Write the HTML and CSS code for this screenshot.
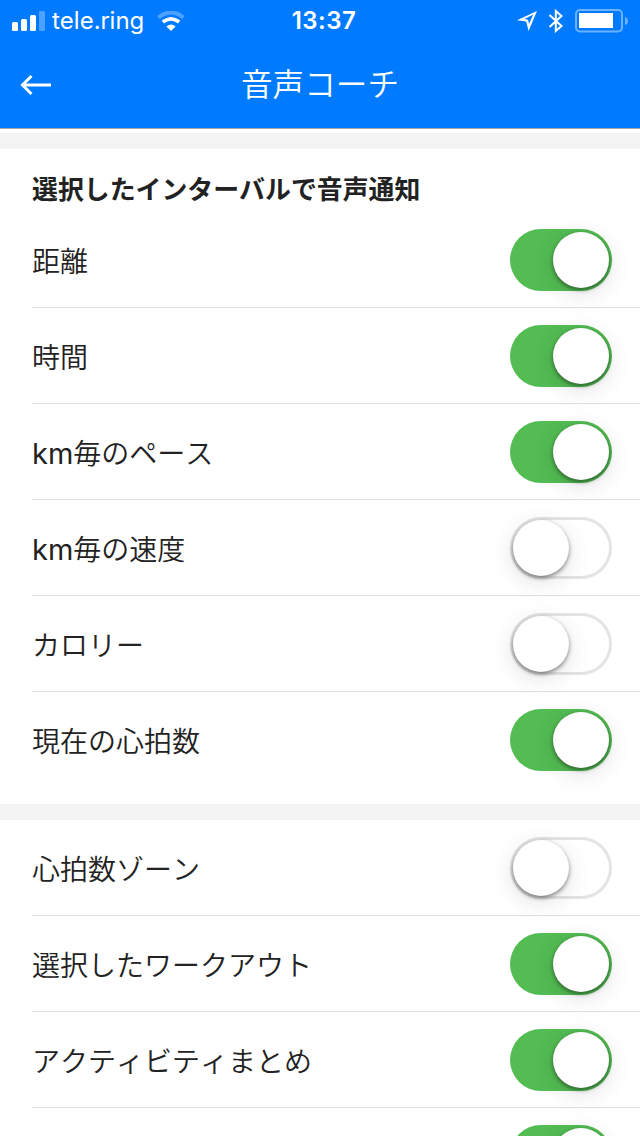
FILE: index.html
```html
<!DOCTYPE html>
<html lang="ja">
<head>
<meta charset="utf-8">
<title>音声コーチ</title>
<link rel="stylesheet" href="styles.css">
</head>
<body>
<header class="header">
  <div class="status">
    <div class="status-left">
      <svg class="signal" width="34" height="20" viewBox="0 0 34 20" fill="#fff"><rect x="0" y="11" width="6" height="9" rx="1.5"/><rect x="9" y="8" width="6" height="12" rx="1.5"/><rect x="18" y="4" width="6" height="16" rx="1.5"/><rect x="27" y="0" width="6" height="20" rx="1.5" opacity=".3"/></svg>
      <span class="carrier">tele.ring</span>
      <svg class="wifi" width="28" height="20" viewBox="0 0 28 20" fill="none" stroke="#fff"><path d="M1.5 6.6Q14-3.6 26.5 6.6" stroke-width="4" opacity=".3"/><path d="M5.8 11Q14 4.8 22.2 11" stroke-width="3.8"/><path d="M9.4 15.4Q14 11.6 18.6 15.4L14 20Z" fill="#fff" stroke="none"/></svg>
    </div>
    <span class="clock">13:37</span>
    <div class="status-right">
      <svg width="20" height="20" viewBox="0 0 20 20" fill="#fff" fill-rule="evenodd"><path d="M20 0L11.6 20L9.2 10.6L0 9.2ZM16.2 3.5L7.5 8L11 8.8L12 13Z"/></svg>
      <svg class="bluetooth" width="16" height="24" viewBox="0 0 16 24" fill="none" stroke="#fff" stroke-width="2"><path d="M1.5 6L13.5 17L7.8 22V2L13.5 7L1.5 18"/></svg>
      <svg class="battery" width="54" height="24" viewBox="0 0 54 24"><rect x="1" y="1" width="46" height="21.5" rx="4" fill="none" stroke="#fff" stroke-width="2" opacity=".42"/><rect x="4" y="4" width="34" height="15" fill="#fff"/><path d="M50 8Q53 9 53 12T50 16Z" fill="#fff" opacity=".42"/></svg>
    </div>
  </div>
  <div class="navbar">
    <svg class="back" width="32" height="22" viewBox="0 0 32 22" fill="none" stroke="#fff" stroke-width="3"><path d="M2 11H31M11.5 2L2.5 11L11.5 20"/></svg>
    <h1 class="title">音声コーチ</h1>
  </div>
</header>
<main>
  <section class="group group-first">
    <h2 class="heading">選択したインターバルで音声通知</h2>
    <div class="row"><span>距離</span><i class="toggle on"></i></div>
    <div class="row"><span>時間</span><i class="toggle on"></i></div>
    <div class="row"><span><b class="unit">km</b>毎のペース</span><i class="toggle on"></i></div>
    <div class="row"><span><b class="unit">km</b>毎の速度</span><i class="toggle"></i></div>
    <div class="row"><span>カロリー</span><i class="toggle"></i></div>
    <div class="row last"><span>現在の心拍数</span><i class="toggle on"></i></div>
  </section>
  <section class="group group-second">
    <div class="row"><span>心拍数ゾーン</span><i class="toggle"></i></div>
    <div class="row"><span>選択したワークアウト</span><i class="toggle on"></i></div>
    <div class="row"><span>アクティビティまとめ</span><i class="toggle on"></i></div>
    <div class="row"><span></span><i class="toggle on"></i></div>
  </section>
</main>
</body>
</html>
```
FILE: styles.css
```css
* { box-sizing: border-box; }
body {
  margin: 0;
  background: #fff;
  color: #222;
  font-family: "Noto Sans CJK JP", sans-serif;
  font-kerning: none;
}
svg { display: block; flex: none; }
.header {
  height: 129px;
  background: #007aff;
  border-bottom: 1px solid #a7a7aa;
  color: #fff;
}
.status {
  height: 40px;
  display: grid;
  grid-template-columns: 1fr auto 1fr;
  padding: 0 11px 0 12px;
  align-items: center;
  font-family: Inter, sans-serif;
}
.status-left, .status-right { display: flex; align-items: center; }
.status-right { justify-content: flex-end; }
.carrier { margin-left: 6px; font-size: 24px; line-height: 40px; padding-top: 1px; }
.wifi { margin-left: 13px; }
.clock { font-size: 24px; font-weight: 600; line-height: 40px; padding: 1px 0 0 7px; letter-spacing: 0.5px; }
.bluetooth { margin-left: 11px; }
.battery { margin-left: 11px; }
.navbar {
  height: 84px;
  display: grid;
  grid-template-columns: 32px 1fr 32px;
  align-items: center;
  padding: 0 20px;
}
.back { margin-top: 5px; }
.title {
  margin: 0;
  text-align: center;
  font-size: 31.6px;
  font-weight: 350;
  line-height: 84px;
}
.group { border-top: 16px solid #f4f4f4; }
.group-first { margin-top: 4px; padding-bottom: 16px; }
.group-second { height: 332px; overflow: hidden; }
.heading {
  margin: 0;
  height: 63px;
  padding: 8px 0 0 32px;
  font-size: 25.9px;
  line-height: 62px;
  font-weight: 700;
}
.row {
  height: 96px;
  margin-left: 32px;
  padding-right: 28px;
  border-bottom: 1px solid #dedede;
  display: flex;
  align-items: center;
  justify-content: space-between;
  font-size: 28px;
  font-weight: 350;
  line-height: 40px;
}
.row span { padding-top: 1px; }
.last { border-color: transparent; }
.unit { font-family: "Inter", sans-serif; font-size: 29px; line-height: 1; font-weight: 400; }
.toggle {
  width: 102px;
  height: 62px;
  padding: 3px;
  display: flex;
  border-radius: 31px;
  background: #fff;
  box-shadow: inset 0 0 0 3px #e4e4e4;
}
.toggle::before {
  content: "";
  width: 56px;
  height: 56px;
  border-radius: 50%;
  background: #fff;
  box-shadow: 0 6px 24px rgba(0, 0, 0, .12), 0 2px 4px rgba(0, 0, 0, .45);
}
.on { justify-content: flex-end; background: #53bc53; box-shadow: none; }
```
